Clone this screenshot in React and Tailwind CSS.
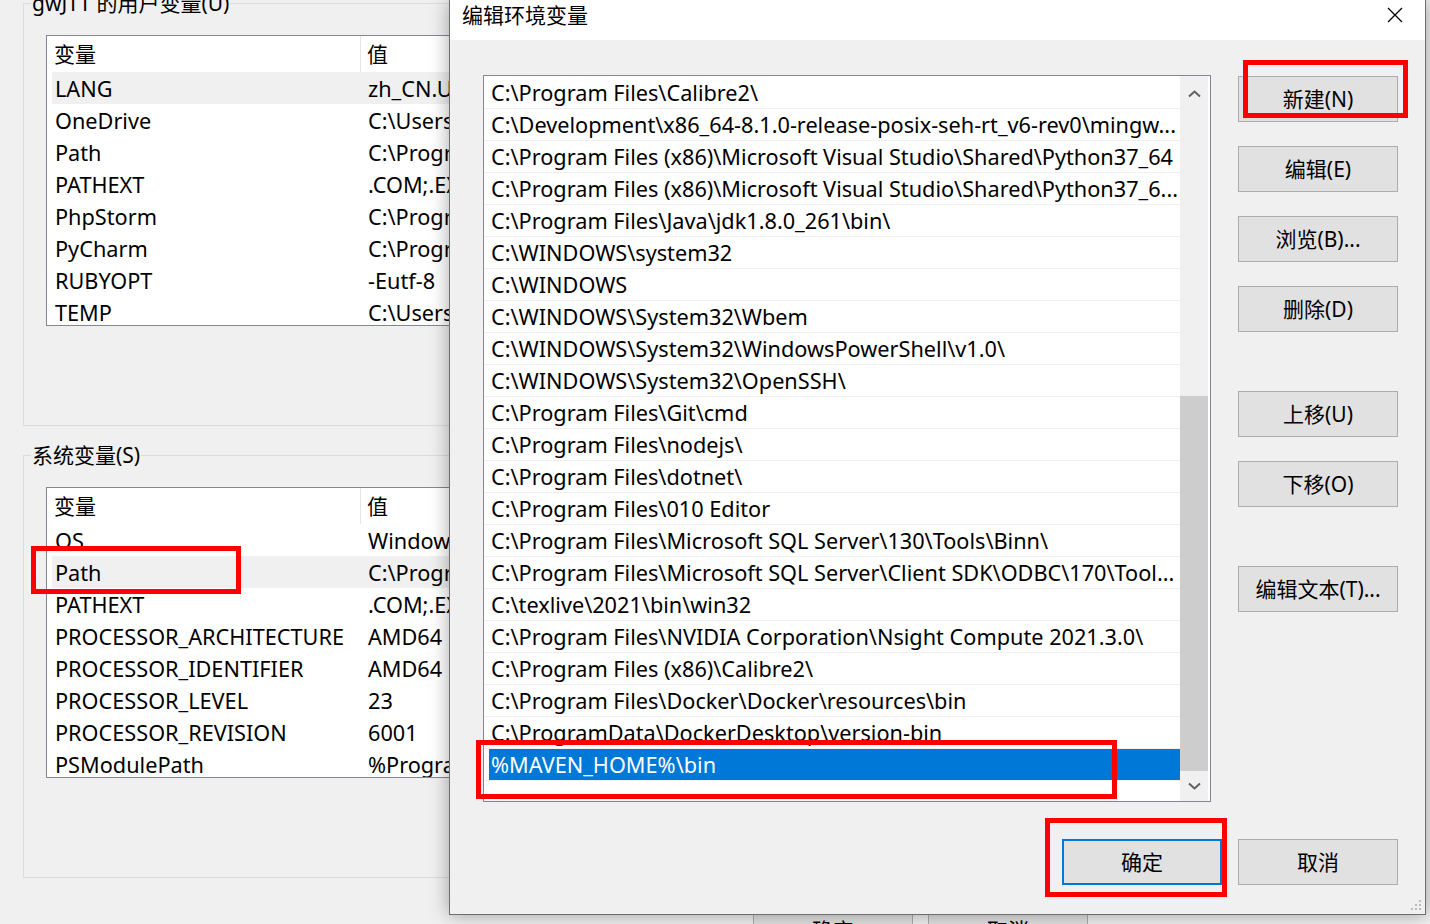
import React from 'react';

const userVars = [
  ['LANG', 'zh_CN.UTF-8'],
  ['OneDrive', 'C:\\Users\\gwjtt\\OneDrive'],
  ['Path', 'C:\\Program Files\\JetBrains\\bin;'],
  ['PATHEXT', '.COM;.EXE;.BAT;.CMD;.VBS'],
  ['PhpStorm', 'C:\\Program Files\\JetBrains\\PhpStorm\\bin;'],
  ['PyCharm', 'C:\\Program Files\\JetBrains\\PyCharm\\bin;'],
  ['RUBYOPT', '-Eutf-8'],
  ['TEMP', 'C:\\Users\\gwjtt\\AppData\\Local\\Temp'],
];

const systemVars = [
  ['OS', 'Windows_NT'],
  ['Path', 'C:\\Program Files\\Calibre2\\;C:\\Development'],
  ['PATHEXT', '.COM;.EXE;.BAT;.CMD;.VBS'],
  ['PROCESSOR_ARCHITECTURE', 'AMD64'],
  ['PROCESSOR_IDENTIFIER', 'AMD64 Family 23 Model 96 Stepping 1'],
  ['PROCESSOR_LEVEL', '23'],
  ['PROCESSOR_REVISION', '6001'],
  ['PSModulePath', '%ProgramFiles%\\WindowsPowerShell\\Modules'],
];

const paths = [
  'C:\\Program Files\\Calibre2\\',
  'C:\\Development\\x86_64-8.1.0-release-posix-seh-rt_v6-rev0\\mingw...',
  'C:\\Program Files (x86)\\Microsoft Visual Studio\\Shared\\Python37_64',
  'C:\\Program Files (x86)\\Microsoft Visual Studio\\Shared\\Python37_6...',
  'C:\\Program Files\\Java\\jdk1.8.0_261\\bin\\',
  'C:\\WINDOWS\\system32',
  'C:\\WINDOWS',
  'C:\\WINDOWS\\System32\\Wbem',
  'C:\\WINDOWS\\System32\\WindowsPowerShell\\v1.0\\',
  'C:\\WINDOWS\\System32\\OpenSSH\\',
  'C:\\Program Files\\Git\\cmd',
  'C:\\Program Files\\nodejs\\',
  'C:\\Program Files\\dotnet\\',
  'C:\\Program Files\\010 Editor',
  'C:\\Program Files\\Microsoft SQL Server\\130\\Tools\\Binn\\',
  'C:\\Program Files\\Microsoft SQL Server\\Client SDK\\ODBC\\170\\Tool...',
  'C:\\texlive\\2021\\bin\\win32',
  'C:\\Program Files\\NVIDIA Corporation\\Nsight Compute 2021.3.0\\',
  'C:\\Program Files (x86)\\Calibre2\\',
  'C:\\Program Files\\Docker\\Docker\\resources\\bin',
  'C:\\ProgramData\\DockerDesktop\\version-bin',
  '%MAVEN_HOME%\\bin',
];

// group box with the label sitting in the top border
const GroupBox = ({ label, className = '', children }) => (
  <fieldset className={`border border-[#dcdcdc] p-0 m-0 w-[1100px] h-[436px] ${className}`}>
    <legend className="ml-[7px] px-[1px] text-[21px] leading-[26px]">{label}</legend>
    <div className="pl-[22px] mt-[19px]">{children}</div>
  </fieldset>
);

const VarList = ({ rows, selected }) => (
  <div className="w-[1060px] h-[291px] border border-[#828790] bg-white overflow-hidden text-[21.7px]">
    <div className="flex h-[36px] text-[21px]">
      <div className="w-[314px] pl-[7px] pt-[2px] flex items-center border-r border-[#e5e5e5]">变量</div>
      <div className="pl-[6px] pt-[2px] flex items-center">值</div>
    </div>
    {rows.map(([name, value], i) => (
      <div key={name} className="h-[32px] flex">
        <div className={`ml-[5px] pt-[2px] flex-1 flex items-center whitespace-nowrap ${i === selected ? 'bg-[#f0f0f0]' : ''}`}>
          <div className="w-[309px] pl-[3px]">{name}</div>
          <div className="pl-[7px]">{value}</div>
        </div>
      </div>
    ))}
  </div>
);

const WinButton = ({ children, primary = false, className = '' }) => (
  <div
    className={`w-[160px] h-[46px] flex items-center justify-center bg-[#e1e1e1] text-[21px] pt-[1px] ${
      primary ? 'border-2 border-[#0078d7]' : 'border border-[#adadad]'
    } ${className}`}
  >
    {children}
  </div>
);

const Chevron = ({ down = false }) => (
  <svg width="13" height="8" viewBox="0 0 13 8">
    <path
      d={down ? 'M1 1.5 L6.5 6.5 L12 1.5' : 'M1 6.5 L6.5 1.5 L12 6.5'}
      fill="none"
      stroke="#606060"
      strokeWidth="2"
    />
  </svg>
);

const Annot = ({ className }) => (
  <div className={`absolute border-[5px] border-[#ff0000] pointer-events-none ${className}`} />
);

export default function App() {
  return (
    <div className="relative w-[1430px] h-[924px] overflow-hidden bg-[#f0f0f0] text-black text-[21px] font-['Noto_Sans','Noto_Sans_CJK_SC',sans-serif]">
      {/* parent window: environment variables */}
      <div className="flex flex-col pl-[23px] w-[1145px]">
        <GroupBox label="gwJTT 的用户变量(U)" className="-mt-[10px]">
          <VarList rows={userVars} selected={0} />
        </GroupBox>
        <GroupBox label="系统变量(S)" className="mt-[16px]">
          <VarList rows={systemVars} selected={1} />
        </GroupBox>
        <div className="mt-[29px] pl-[730px] flex gap-[15px]">
          <WinButton>确定</WinButton>
          <WinButton>取消</WinButton>
        </div>
      </div>

      {/* edit dialog */}
      <div className="absolute left-[449px] top-0 w-[977px] h-[915px] flex flex-col bg-[#f0f0f0] border border-t-0 border-[#6f6f6f] shadow-[0_0_18px_rgba(0,0,0,0.35)]">
        <div className="h-[40px] bg-white flex items-start justify-between shrink-0">
          <div className="pl-[12px] leading-[30px]">编辑环境变量</div>
          <div className="w-[60px] h-[29px] flex items-center justify-center">
            <svg width="16" height="16" viewBox="0 0 16 16">
              <path d="M1 1 L15 15 M15 1 L1 15" stroke="#000" strokeWidth="1.3" />
            </svg>
          </div>
        </div>

        <div className="relative flex-1 pl-[33px] pt-[35px]">
          <div className="flex gap-[27px] items-start">
            {/* path list */}
            <div className="w-[728px] h-[727px] border border-[#828790] bg-white flex text-[21.7px]">
              <div className="w-[696px] pt-[1px] overflow-hidden">
                {paths.map((p, i) => {
                  const sel = i === paths.length - 1;
                  return (
                    <div key={p} className="h-[32px] border-b border-[#f0f0f0] flex">
                      <div
                        className={`ml-[5px] pl-[2px] pt-[2px] flex-1 flex items-center whitespace-nowrap overflow-hidden ${
                          sel ? 'bg-[#0078d7] text-white' : ''
                        }`}
                      >
                        {p}
                      </div>
                    </div>
                  );
                })}
              </div>
              <div className="w-[28px] bg-[#f0f0f0] flex flex-col">
                <div className="h-[36px] flex items-center justify-center">
                  <Chevron />
                </div>
                <div className="flex-1 flex flex-col justify-end">
                  <div className="h-[375px] bg-[#cdcdcd]" />
                </div>
                <div className="h-[30px] flex items-center justify-center">
                  <Chevron down />
                </div>
              </div>
            </div>

            {/* side buttons */}
            <div className="pt-[1px] flex flex-col">
              <WinButton>新建(N)</WinButton>
              <WinButton className="mt-[24px]">编辑(E)</WinButton>
              <WinButton className="mt-[24px]">浏览(B)...</WinButton>
              <WinButton className="mt-[24px]">删除(D)</WinButton>
              <WinButton className="mt-[59px]">上移(U)</WinButton>
              <WinButton className="mt-[24px]">下移(O)</WinButton>
              <WinButton className="mt-[59px]">编辑文本(T)...</WinButton>
            </div>
          </div>

          <div className="mt-[37px] w-[915px] flex justify-end gap-[16px]">
            <WinButton primary>确定</WinButton>
            <WinButton>取消</WinButton>
          </div>

          {/* resize grip */}
          <svg className="absolute right-[3px] bottom-[3px]" width="12" height="12" viewBox="0 0 12 12">
            <rect x="9" y="1" width="2" height="2" fill="#bdbdbd" />
            <rect x="9" y="5" width="2" height="2" fill="#bdbdbd" />
            <rect x="5" y="5" width="2" height="2" fill="#bdbdbd" />
            <rect x="9" y="9" width="2" height="2" fill="#bdbdbd" />
            <rect x="5" y="9" width="2" height="2" fill="#bdbdbd" />
            <rect x="1" y="9" width="2" height="2" fill="#bdbdbd" />
          </svg>
        </div>
      </div>

      {/* red annotation boxes */}
      <Annot className="left-[31px] top-[546px] w-[210px] h-[48px]" />
      <Annot className="left-[1243px] top-[60px] w-[165px] h-[58px]" />
      <Annot className="left-[476px] top-[740px] w-[641px] h-[59px]" />
      <Annot className="left-[1045px] top-[818px] w-[182px] h-[79px]" />
    </div>
  );
}
